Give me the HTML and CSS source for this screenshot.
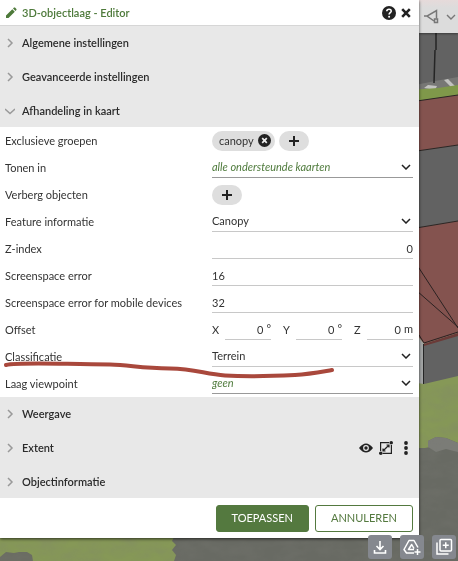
FILE: index.html
```html
<!DOCTYPE html>
<html lang="nl">
<head>
<meta charset="utf-8">
<meta name="viewport" content="width=device-width, initial-scale=1">
<title>3D-objectlaag - Editor</title>
<link rel="stylesheet" href="styles.css">
</head>
<body>
<svg class="scene" viewBox="0 0 458 561" preserveAspectRatio="xMaxYMax slice" aria-hidden="true">
  <defs>
    <filter id="grain" x="0" y="0" width="100%" height="100%">
      <feTurbulence type="fractalNoise" baseFrequency="0.05 0.09" numOctaves="3" seed="4"/>
      <feColorMatrix values="0 0 0 0 0.2  0 0 0 0 0.2  0 0 0 0 0.18  0.9 0 0 0 -0.3"/>
    </filter>
  </defs>
  <rect width="458" height="561" fill="#869857"/>
  <path d="M410 448h15l5-1-2-6 8-4 10 1 12 5v118H174l2-6-4-5 4-5-4-4 3-6h235z" fill="#686a63"/>
  <path d="M428 441l8-4 10 1 12 5v9l-12-3-10 3-8-5z" fill="#7b7c77"/>
  <path d="M0 557l6-5 8 1 5-1 8 0 5 3 1 6H0z" fill="#6b6d63"/>
  <rect y="384" width="458" height="177" filter="url(#grain)" opacity=".5"/>
  <rect x="410" width="48" height="90" fill="#626262"/>
  <path d="M410 86l25-5 23-4v12l-48 6z" fill="#777775"/>
  <path d="M424 88l4-3 9 1-2 4zM444 80l4-1 7 7-4 1z" fill="#c2c2c0"/>
  <path d="M410 90l28-2 20-3v12l-48 6z" fill="#7f984a"/>
  <path d="M436 33v17M435 50l-1 33" stroke="#252525" stroke-width="1.5"/>
  <path d="M410 102l48-7v50l-48 7z" fill="#84534f"/>
  <path d="M410 152l48-7v76l-48 8z" fill="#626262"/>
  <path d="M410 229l48-8v112l-34 11-14-18z" fill="#84534f"/>
  <path d="M410 102l48-7M410 152l48-7M410 229l48-8" stroke="#2b2525" fill="none"/>
  <path d="M417 265l41 63M417 291l41 36M419 335l5 8 34-11" stroke="#2b2222" fill="none"/>
  <path d="M424 344l34-11v43l-34 8z" fill="#626262"/>
  <path d="M424 344l34-11v3l-34 10z" fill="#6b3a37"/>
  <path d="M417 335l7 9v40l-7-1z" fill="#a3a5a5"/>
  <path d="M423.500 344v40" stroke="#252525"/>
</svg>

<div class="map-tools">
  <button class="tool" aria-label="Viewpoint">
    <svg width="16" height="16" viewBox="0 0 16 16" fill="none" stroke="#777" stroke-width="1.500"><path d="M0 7h3M12.500 9.500V1.500L3 7l7 5"/><rect x="10.500" y="10" width="3" height="3.500"/></svg>
  </button>
  <button class="tool" aria-label="Meer">
    <svg width="10" height="16" viewBox="0 0 10 16" fill="none" stroke="#777" stroke-width="1.400"><path d="M1 6l4 4 4-4"/></svg>
  </button>
</div>

<main class="panel">
  <header class="title-bar">
    <svg width="12" height="12" viewBox="0 0 12 12" fill="#4e7a3b"><path d="M1 8.500L7.300 2.200l2.500 2.500L3.500 11H1zM8 1.500L9 .6q.5-.4 1 0l1.400 1.400q.4.500 0 1l-.9 1z"/></svg>
    <h1>3D-objectlaag - Editor</h1>
    <button class="icon-button" aria-label="Help">
      <svg width="14" height="14" viewBox="0 0 14 14"><circle cx="7" cy="7" r="7" fill="#222"/><path d="M4.800 5.300C4.900 2.500 9.300 2.600 9.200 5.200 9.200 6.700 7.100 6.800 7.100 8.600" fill="none" stroke="#fff" stroke-width="1.600"/><circle cx="7.100" cy="10.700" r="1" fill="#fff"/></svg>
    </button>
    <button class="icon-button" aria-label="Sluiten">
      <svg width="10" height="10" viewBox="0 0 10 10" stroke="#222" stroke-width="2.600"><path d="M1.200 1.200l7.600 7.600M8.800 1.200L1.200 8.800"/></svg>
    </button>
  </header>

  <div class="sections">
    <section class="section-head"><button class="toggle" aria-expanded="false"><svg class="arrow" viewBox="0 0 10 10"><path d="M3 1l4 4-4 4"/></svg>Algemene instellingen</button></section>
    <section class="section-head"><button class="toggle" aria-expanded="false"><svg class="arrow" viewBox="0 0 10 10"><path d="M3 1l4 4-4 4"/></svg>Geavanceerde instellingen</button></section>
    <section class="section-head"><button class="toggle" aria-expanded="true"><svg class="arrow" viewBox="0 0 10 10"><path d="M0 3l5 4.500 5-4.500"/></svg>Afhandeling in kaart</button></section>
  </div>

  <form class="settings" id="settings">
    <div class="row">
      <span>Exclusieve groepen</span>
      <div class="chips">
        <span class="chip">canopy
          <button type="button" class="icon-button" aria-label="Verwijder canopy"><svg width="13" height="13" viewBox="0 0 13 13"><circle cx="6.500" cy="6.500" r="6.500" fill="#222"/><path d="M4.200 4.200l4.600 4.600M8.800 4.200L4.200 8.800" stroke="#eee" stroke-width="1.700"/></svg></button>
        </span>
        <button type="button" class="add" aria-label="Groep toevoegen"><svg width="10" height="10" viewBox="0 0 10 10"><path d="M5 0v10M0 5h10" stroke="#222" stroke-width="2"/></svg></button>
      </div>
    </div>
    <div class="row">
      <label for="maps">Tonen in</label>
      <div class="field strong"><select id="maps" class="placeholder"><option>alle ondersteunde kaarten</option></select><svg class="caret" viewBox="0 0 10 6"><path d="M1 1l4 4 4-4"/></svg></div>
    </div>
    <div class="row">
      <span>Verberg objecten</span>
      <div class="chips"><button type="button" class="add" aria-label="Object toevoegen"><svg width="10" height="10" viewBox="0 0 10 10"><path d="M5 0v10M0 5h10" stroke="#222" stroke-width="2"/></svg></button></div>
    </div>
    <div class="row">
      <label for="feature">Feature informatie</label>
      <div class="field"><select id="feature"><option>Canopy</option></select><svg class="caret" viewBox="0 0 10 6"><path d="M1 1l4 4 4-4"/></svg></div>
    </div>
    <div class="row">
      <label for="zindex">Z-index</label>
      <div class="field"><input id="zindex" class="number" value="0"></div>
    </div>
    <div class="row">
      <label for="sse">Screenspace error</label>
      <div class="field"><input id="sse" value="16"></div>
    </div>
    <div class="row">
      <label for="sse-mobile">Screenspace error for mobile devices</label>
      <div class="field"><input id="sse-mobile" value="32"></div>
    </div>
    <div class="row">
      <span>Offset</span>
      <div class="axes">
        <div class="axis"><label for="off-x">X</label><div class="field"><input id="off-x" class="number" value="0"><span class="unit">°</span></div></div>
        <div class="axis"><label for="off-y">Y</label><div class="field"><input id="off-y" class="number" value="0"><span class="unit">°</span></div></div>
        <div class="axis"><label for="off-z">Z</label><div class="field"><input id="off-z" class="number" value="0"><span class="unit">m</span></div></div>
      </div>
    </div>
    <div class="row">
      <label for="class">Classificatie</label>
      <div class="field"><select id="class"><option>Terrein</option></select><svg class="caret" viewBox="0 0 10 6"><path d="M1 1l4 4 4-4"/></svg></div>
      <svg class="marker" viewBox="0 0 408 27" aria-hidden="true"><path d="M1 22C14 19 50 21 105 21.500C125 22 135 25 165 25.500C190 26 200 31 220 32.500C245 34 270 33 290 32C305 31 315 29 327 27"/></svg>
    </div>
    <div class="row">
      <label for="viewpoint">Laag viewpoint</label>
      <div class="field strong"><select id="viewpoint" class="placeholder"><option>geen</option></select><svg class="caret" viewBox="0 0 10 6"><path d="M1 1l4 4 4-4"/></svg></div>
    </div>
  </form>

  <div class="sections">
    <section class="section-head"><button class="toggle" aria-expanded="false"><svg class="arrow" viewBox="0 0 10 10"><path d="M3 1l4 4-4 4"/></svg>Weergave</button></section>
    <section class="section-head">
      <button class="toggle" aria-expanded="false"><svg class="arrow" viewBox="0 0 10 10"><path d="M3 1l4 4-4 4"/></svg>Extent</button>
      <button class="icon-button" aria-label="Tonen"><svg width="14" height="14" viewBox="0 0 14 14"><path d="M0 7Q3.500 2.500 7 2.500T14 7Q10.500 11.500 7 11.500T0 7z" fill="#222"/><circle cx="7" cy="7" r="2.900" fill="#e8e8e8"/><circle cx="7" cy="7" r="1.700" fill="#222"/></svg></button>
      <button class="icon-button" aria-label="Extent tekenen"><svg width="14" height="14" viewBox="0 0 14 14" fill="none" stroke="#222" stroke-width="1.200"><path d="M10 1.600H1.600V10M4 12.400h8.400V4M4 10l6-6M4 7.500V10h2.500M7.500 4H10v2.500"/><circle cx="1.800" cy="12.200" r="1.800" fill="#222" stroke="none"/><circle cx="12.200" cy="1.800" r="1.800" fill="#222" stroke="none"/></svg></button>
      <button class="icon-button" aria-label="Meer acties"><svg width="14" height="14" viewBox="0 0 14 14" fill="#222"><circle cx="7" cy="2" r="1.900"/><circle cx="7" cy="7" r="1.900"/><circle cx="7" cy="12" r="1.900"/></svg></button>
    </section>
    <section class="section-head"><button class="toggle" aria-expanded="false"><svg class="arrow" viewBox="0 0 10 10"><path d="M3 1l4 4-4 4"/></svg>Objectinformatie</button></section>
  </div>

  <footer class="actions">
    <button type="submit" form="settings" class="btn primary">TOEPASSEN</button>
    <button type="button" class="btn">ANNULEREN</button>
  </footer>
</main>

<nav class="quick" aria-label="Acties">
  <button aria-label="Downloaden"><svg width="16" height="16" viewBox="0 0 16 16" fill="none" stroke="#fff" stroke-width="1.600"><path d="M8 2v8M4.500 7L8 10.500 11.500 7M2.500 11v3h11v-3"/></svg></button>
  <button aria-label="Toevoegen aan Drive"><svg width="18" height="18" viewBox="0 0 18 18" fill="none" stroke="#fff" stroke-width="1.500" stroke-linejoin="round"><path d="M11 15H3.500L1 11.500 6 2.500h5l4 7M11 11.500H5.500L8.700 6.500l2.300 4M14.500 11v6M11.500 14h6"/></svg></button>
  <button aria-label="Kopie toevoegen"><svg width="18" height="18" viewBox="0 0 18 18" fill="none" stroke="#fff" stroke-width="1.500"><rect x="5" y="1.500" width="11.500" height="11.500" rx="1"/><path d="M2 4.500v11.500h11.500M10.750 4.200v6M7.750 7.200h6"/></svg></button>
</nav>
</body>
</html>
```
FILE: styles.css
```css
* {
  box-sizing: border-box;
}

body {
  margin: 0;
  min-height: 100vh;
  font: 11px/14px Lato, sans-serif;
  color: #333;
  overflow: hidden;
}

button,
input,
select {
  font: inherit;
  color: inherit;
  margin: 0;
  padding: 0;
  border: 0;
  background: none;
}

svg {
  display: block;
  flex: none;
}

.scene {
  position: fixed;
  inset: 0;
  width: 100%;
  height: 100%;
}

.map-tools {
  position: fixed;
  top: 0;
  right: 0;
  height: 33px;
  width: 39px;
  display: flex;
  align-items: center;
  gap: 6px;
  padding-left: 5px;
  background: linear-gradient(#e6dada, #dcdcdc 8px);
  box-shadow: 0 1px 2px #0006;
}

.panel {
  position: relative;
  width: calc(100% - 39px);
  background: #fff;
  box-shadow: 0 1px 3px #000a;
}

.title-bar {
  display: flex;
  align-items: center;
  gap: 5px;
  height: 26px;
  padding: 0 8px 0 5px;
  border-bottom: 1px solid #d6d6d6;
}

.title-bar h1 {
  flex: 1;
  margin: 0;
  font-size: 11px;
  font-weight: 600;
  color: #4e7a3b;
}

.icon-button {
  display: flex;
}

.sections {
  display: grid;
  gap: 1px;
  background: #e8e8e8;
}

.section-head {
  display: flex;
  align-items: center;
  gap: 6px;
  height: 33px;
  padding: 1px 6px 0 5px;
}

.toggle {
  flex: 1;
  display: flex;
  align-items: center;
  gap: 7px;
  height: 100%;
  font-weight: 600;
  color: #2b2b2b;
}

.arrow {
  width: 10px;
  height: 10px;
  fill: none;
  stroke: #999;
  stroke-width: 1.5;
}

.settings {
  padding: 0 6px 0 5px;
}

.row {
  position: relative;
  display: grid;
  grid-template-columns: 207fr 201fr;
  align-items: center;
  height: 27px;
}

.field {
  display: flex;
  align-items: center;
  min-width: 0;
  height: 21px;
  border-bottom: 1px solid #c8c8c8;
}

.strong {
  border-color: #999;
}

.field input,
.field select {
  flex: 1;
  width: 0;
  min-width: 0;
  height: 20px;
  appearance: none;
}

.field .number {
  text-align: right;
}

.field .placeholder {
  font-style: italic;
  color: #4e7a3b;
}

.caret {
  width: 10px;
  height: 6px;
  margin-right: 2px;
  fill: none;
  stroke: #222;
  stroke-width: 1.5;
  pointer-events: none;
}

.chips,
.chip,
.add {
  display: flex;
  align-items: center;
}

.chips {
  gap: 4px;
}

.chip,
.add {
  height: 20px;
  border-radius: 10px;
  background: #dedede;
}

.chip {
  gap: 4px;
  padding: 0 4px 0 7px;
}

.add {
  justify-content: center;
  width: 30px;
}

.axes {
  display: grid;
  grid-template-columns: repeat(3, 1fr);
  gap: 12px;
}

.axis {
  display: grid;
  grid-template-columns: 13px 1fr;
  align-items: center;
}

.unit {
  padding-left: 3px;
}

.marker {
  position: absolute;
  inset: 0;
  width: 100%;
  height: 27px;
  overflow: visible;
  z-index: 1;
  pointer-events: none;
  fill: none;
  stroke: #a9483c;
  stroke-width: 4;
  stroke-linecap: round;
}

.actions {
  display: flex;
  justify-content: flex-end;
  align-items: center;
  gap: 6px;
  height: 40px;
  padding: 0 6px;
}

.btn {
  height: 27px;
  padding: 0 15px;
  border: 1px solid #54793f;
  border-radius: 3px;
  font-size: 11px;
  color: #54793f;
  background: #fff;
}

.primary {
  background: #54793f;
  color: #fff;
}

.quick {
  position: fixed;
  right: 2px;
  bottom: 2px;
  display: flex;
  gap: 8px;
}

.quick button {
  display: grid;
  place-items: center;
  width: 24px;
  height: 24px;
  border-radius: 3px;
  background: #85888f;
}
```
